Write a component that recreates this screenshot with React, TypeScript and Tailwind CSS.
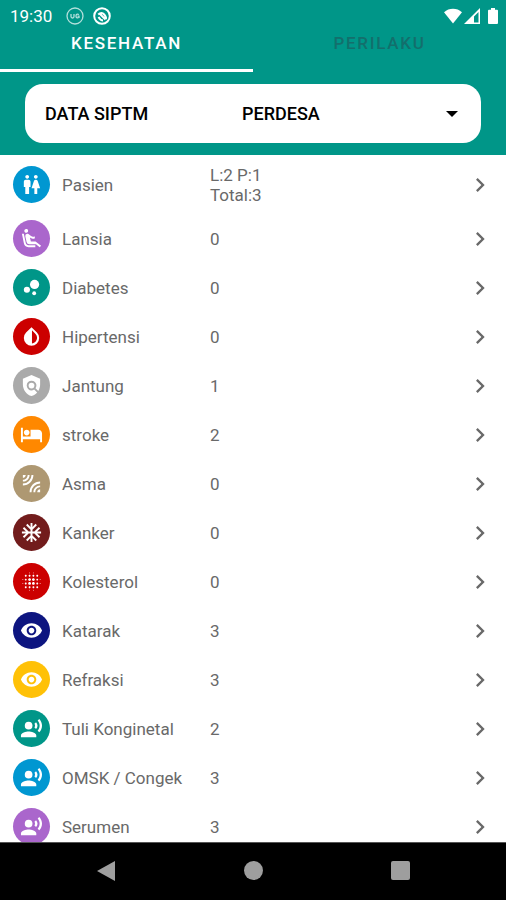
import React from 'react';
import {
  MdAcUnit,
  MdAirlineSeatReclineExtra,
  MdBlurOn,
  MdBubbleChart,
  MdChevronRight,
  MdHotel,
  MdLeakAdd,
  MdPolicy,
  MdRecordVoiceOver,
  MdRemoveRedEye,
  MdWc,
} from 'react-icons/md';

type Row = {
  name: string;
  value: string[];
  color: string;
  icon: React.ComponentType<{ className?: string }>;
};

// Blood drop: left half solid, right half outlined
const DropIcon = ({ className }: { className?: string }) => (
  <svg viewBox="0 0 24 24" className={className} fill="currentColor">
    <path
      fillRule="evenodd"
      d="M17.660 7.930 12 2.270 6.340 7.930a8 8 0 1 0 11.320 0zM12.500 19.300V5.600l3.740 3.750a6 6 0 0 1-3.740 9.950z"
    />
  </svg>
);

const rows: Row[] = [
  { name: 'Pasien', value: ['L:2 P:1', 'Total:3'], color: 'bg-[#0097d1]', icon: MdWc },
  { name: 'Lansia', value: ['0'], color: 'bg-[#aa66cc]', icon: MdAirlineSeatReclineExtra },
  { name: 'Diabetes', value: ['0'], color: 'bg-[#009688]', icon: MdBubbleChart },
  { name: 'Hipertensi', value: ['0'], color: 'bg-[#cc0000]', icon: DropIcon },
  { name: 'Jantung', value: ['1'], color: 'bg-[#aaaaaa]', icon: MdPolicy },
  { name: 'stroke', value: ['2'], color: 'bg-[#ff8800]', icon: MdHotel },
  { name: 'Asma', value: ['0'], color: 'bg-[#ae9872]', icon: MdLeakAdd },
  { name: 'Kanker', value: ['0'], color: 'bg-[#721c1c]', icon: MdAcUnit },
  { name: 'Kolesterol', value: ['0'], color: 'bg-[#cc0000]', icon: MdBlurOn },
  { name: 'Katarak', value: ['3'], color: 'bg-[#0d1580]', icon: MdRemoveRedEye },
  { name: 'Refraksi', value: ['3'], color: 'bg-[#ffc107]', icon: MdRemoveRedEye },
  { name: 'Tuli Konginetal', value: ['2'], color: 'bg-[#009688]', icon: MdRecordVoiceOver },
  { name: 'OMSK / Congek', value: ['3'], color: 'bg-[#0097d1]', icon: MdRecordVoiceOver },
  { name: 'Serumen', value: ['3'], color: 'bg-[#aa66cc]', icon: MdRecordVoiceOver },
];

const StatusBar = () => (
  <div className="flex h-8 items-center pl-[10px] pr-2 text-white">
    <span className="text-[17px] leading-5">19:30</span>
    <svg viewBox="0 0 18 18" className="ml-[14px] size-[18px]" fill="none" stroke="currentColor" opacity="0.7">
      <circle cx="9" cy="9" r="8" strokeWidth="1.3" />
      <path d="M5 7v2.5q0 1.500 1.500 1.500T8 9.500V7M13 7.500q-3-1-3 1.500t3 1.500V9.200h-1.500" strokeWidth="1.3" />
    </svg>
    <svg viewBox="0 0 18 18" className="ml-[9px] size-[18px]" fill="none" stroke="currentColor">
      <circle cx="9" cy="9" r="7.8" strokeWidth="2" />
      <path d="M5.200 7.500q3.500-3 6 0t1.600 4.500M5.500 10q2 3.500 4.500 3.500M7 7l5.500 5.500" strokeWidth="2" />
    </svg>
    <div className="ml-auto flex items-center">
      <svg viewBox="0 0 18 16" className="h-4 w-[18px]" fill="currentColor">
        <path d="M9 15.500 0 4.200Q4 .8 9 .8t9 3.400z" />
      </svg>
      <svg viewBox="0 0 16 16" className="ml-[2px] size-4" fill="currentColor">
        <path fillRule="evenodd" d="M0 16 16 0v16zM10 8.500v6h4.500V4z" />
      </svg>
      <svg viewBox="0 0 10 16" className="ml-2 h-4 w-[10px]" fill="currentColor">
        <path d="M3 0h4v1.800h2q1 0 1 1V15q0 1-1 1H1q-1 0-1-1V2.800q0-1 1-1h2z" />
      </svg>
    </div>
  </div>
);

const Tabs = () => (
  <div role="tablist" className="flex h-10 text-[17px] font-medium leading-5 tracking-widest">
    <button role="tab" aria-selected="true" className="flex-1 border-b-[3px] border-white pb-4 text-white">
      KESEHATAN
    </button>
    <button role="tab" aria-selected="false" className="flex-1 border-b-[3px] border-transparent pb-4 text-[#136f6c]">
      PERILAKU
    </button>
  </div>
);

const Filter = () => (
  <div className="relative mx-[25px] my-3 flex h-[59px] items-center rounded-[18px] bg-white px-5 text-lg font-medium text-black">
    <label htmlFor="filter" className="w-[197px] shrink-0">
      DATA SIPTM
    </label>
    <select id="filter" className="h-full min-w-0 flex-1 appearance-none bg-transparent outline-none">
      <option>PERDESA</option>
    </select>
    <svg viewBox="0 0 12 6" className="pointer-events-none absolute right-[23px] h-[6px] w-3">
      <path d="M0 0h12L6 6z" />
    </svg>
  </div>
);

const ListRow = ({ name, value, color, icon: Icon }: Row) => (
  <li>
    <a
      href="#"
      className={`flex items-center pl-[13px] pr-3 ${value.length > 1 ? 'h-[59px]' : 'h-[49px]'}`}
    >
      <span className={`flex size-[37px] shrink-0 items-center justify-center rounded-full text-white ${color}`}>
        <Icon className="size-[23px]" />
      </span>
      <span className="ml-3 w-[148px] shrink-0">{name}</span>
      <span className="flex-1">
        {value.map((line) => (
          <span key={line} className="block">
            {line}
          </span>
        ))}
      </span>
      <MdChevronRight className="size-7" />
    </a>
  </li>
);

const NavBar = () => (
  <nav className="flex h-[58px] shrink-0 items-center justify-around border-t border-[#555555] bg-black px-8 pb-[2px] text-[#9e9e9e]">
    <button aria-label="Back">
      <svg viewBox="0 0 20 22" className="h-[22px] w-5" fill="currentColor">
        <path d="M1 11 19 1v20z" />
      </svg>
    </button>
    <button aria-label="Home" className="size-[19px] rounded-full bg-[#9e9e9e]" />
    <button aria-label="Recent apps" className="size-[19px] rounded-[2px] bg-[#9e9e9e]" />
  </nav>
);

const App = () => {
  return (
    <div className="flex h-screen flex-col bg-white font-[Roboto,sans-serif]">
      <header className="shrink-0 bg-[#009688]">
        <StatusBar />
        <Tabs />
        <Filter />
      </header>

      <main className="min-h-0 flex-1 overflow-hidden">
        <ul className="text-[17px] leading-5 text-[#696969]">
          {rows.map((row) => (
            <ListRow key={row.name} {...row} />
          ))}
        </ul>
      </main>

      <NavBar />
    </div>
  );
};

export default App;
